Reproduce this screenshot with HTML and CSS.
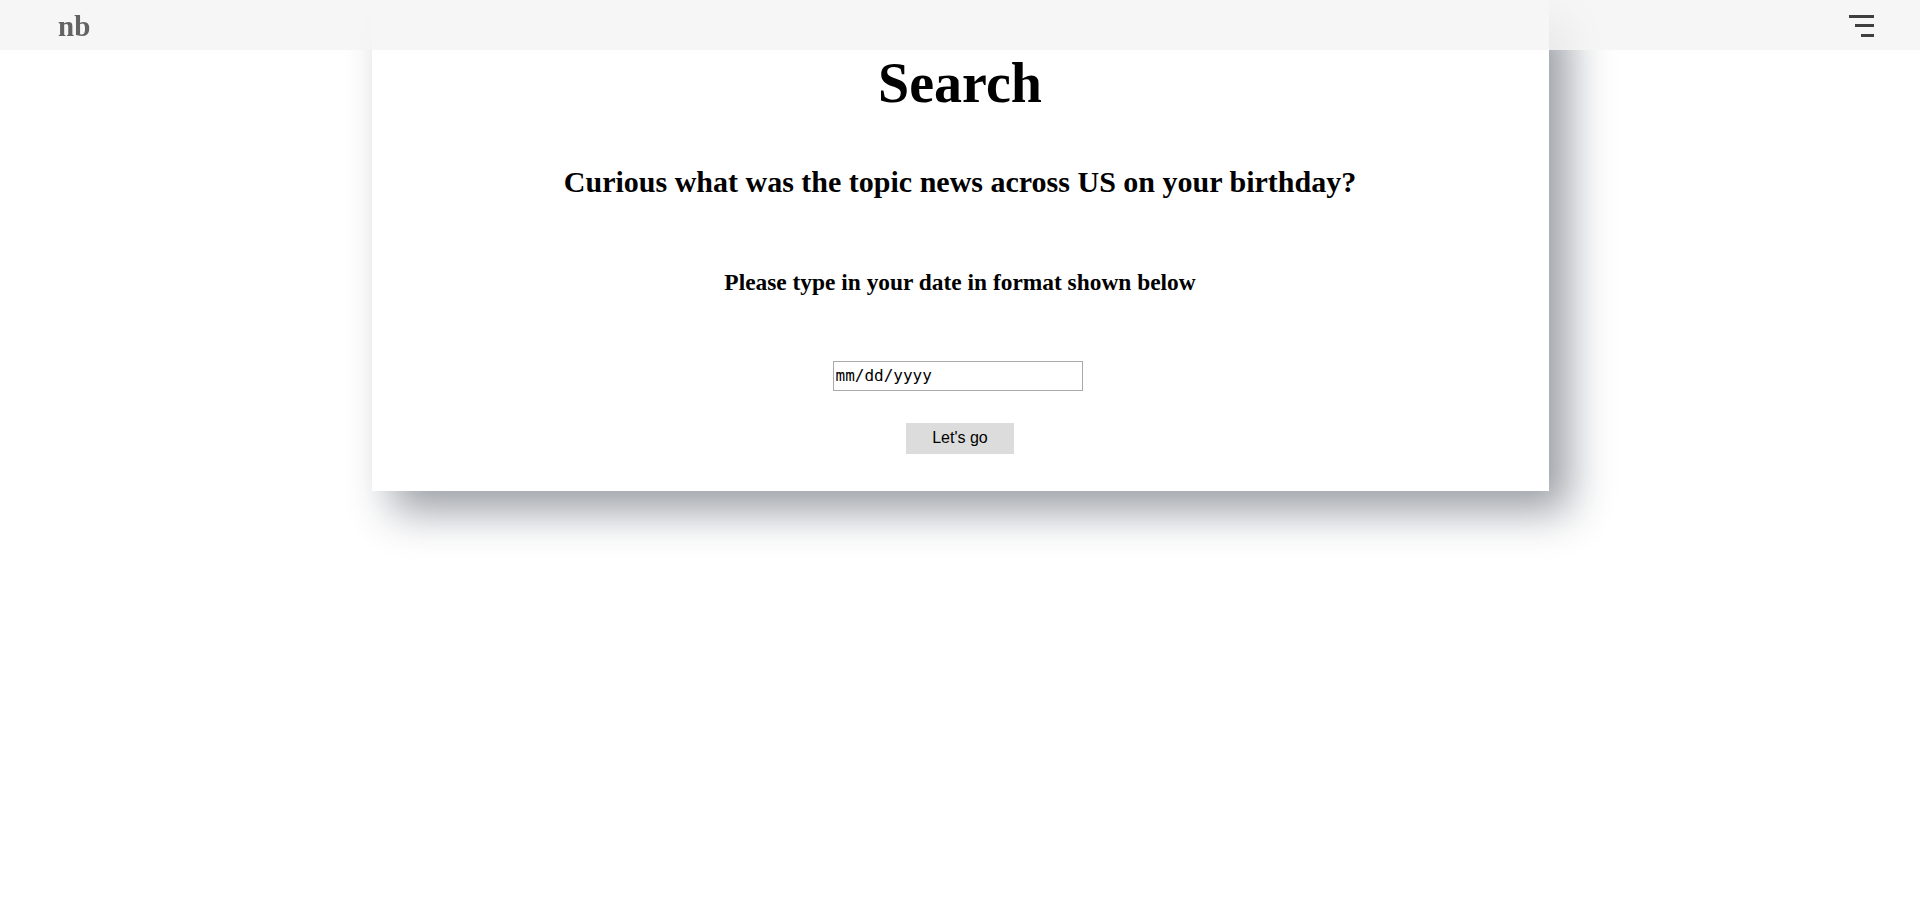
FILE: index.html
```html
<!DOCTYPE html>
<html lang="en">
<head>
<meta charset="utf-8">
<title>Search</title>
<link rel="stylesheet" href="styles.css">
</head>
<body>
<header class="topbar">
  <a class="brand" href="#">nb</a>
  <button class="menu" type="button" aria-label="Menu">
    <span class="bar bar-long"></span>
    <span class="bar bar-mid"></span>
    <span class="bar bar-short"></span>
  </button>
</header>
<main class="card">
  <h1 class="title">Search</h1>
  <h2 class="subtitle">Curious what was the topic news across US on your birthday?</h2>
  <h3 class="hint">Please type in your date in format shown below</h3>
  <form class="search-form">
    <input class="date-input" type="text" placeholder="mm/dd/yyyy">
    <button class="go" type="button">Let's go</button>
  </form>
</main>
</body>
</html>
```
FILE: styles.css
```css
html, body {
  margin: 0;
  padding: 0;
  background: #ffffff;
}

body {
  min-height: 100vh;
  font-family: "Liberation Serif", "Times New Roman", serif;
  font-size: 20px;
  color: #000000;
}

.topbar {
  position: fixed;
  top: 0;
  left: 0;
  right: 0;
  height: 50px;
  box-sizing: border-box;
  padding: 0 46px 0 58px;
  display: flex;
  align-items: center;
  justify-content: space-between;
  background: rgba(244, 244, 244, 0.85);
  z-index: 10;
}

.brand {
  font-family: "Liberation Serif", "Times New Roman", serif;
  font-weight: bold;
  font-size: 29px;
  line-height: 1;
  color: #636363;
  text-decoration: none;
  margin-top: 3px;
}

.menu {
  display: flex;
  flex-direction: column;
  align-items: flex-end;
  gap: 6.5px;
  padding: 0;
  margin: 1px 0 0 0;
  border: none;
  background: transparent;
}

.bar {
  display: block;
  height: 3px;
  background: #3f3f3f;
}

.bar-long { width: 25px; }
.bar-mid { width: 19px; }
.bar-short { width: 13px; }

.card {
  width: 1177px;
  margin: 0 auto;
  box-sizing: border-box;
  padding: 51px 20px 37px;
  background: #ffffff;
  box-shadow: 20px 20px 40px rgba(30, 40, 55, 0.45);
  text-align: center;
}

.title {
  margin: 0;
  font-size: 56px;
  line-height: 64px;
  font-weight: bold;
}

.subtitle {
  margin: 50px 0 0;
  font-size: 30px;
  line-height: 34px;
  font-weight: bold;
}

.hint {
  margin: 69.6px 0 0;
  font-size: 23.4px;
  line-height: 27px;
  font-weight: bold;
}

.search-form {
  margin-top: 65.4px;
  display: flex;
  flex-direction: column;
  align-items: center;
  gap: 32px;
}

.date-input {
  width: 250px;
  height: 30px;
  box-sizing: border-box;
  margin: 0 5px 0 0;
  padding: 0 2px;
  border: 1px solid #a9a9a9;
  border-radius: 0;
  font-family: "DejaVu Sans Mono", "Liberation Mono", monospace;
  font-size: 16px;
  color: #000000;
  background: #ffffff;
  outline: none;
}

.date-input::placeholder {
  color: #000000;
  opacity: 1;
}

.go {
  width: 108px;
  height: 31px;
  margin: 0;
  padding: 0;
  border: none;
  border-radius: 0;
  background: #dcdcdc;
  font-family: "Liberation Sans", Arial, sans-serif;
  font-size: 16px;
  color: #000000;
}
```
